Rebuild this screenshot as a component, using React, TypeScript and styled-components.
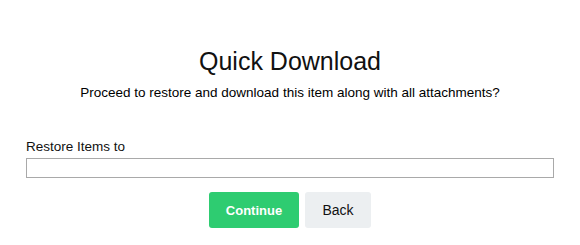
import React from "react";
import styled, { createGlobalStyle } from "styled-components";

const Global = createGlobalStyle`
  html, body { margin: 0; padding: 0; background: #fff; }
  body { font-family: "Liberation Sans", Arial, sans-serif; color: #000; }
`;

const Dialog = styled.div`
  width: 580px;
  height: 245px;
  box-sizing: border-box;
  padding: 46px 26px 0 26px;
  display: flex;
  flex-direction: column;
`;

const Title = styled.h1`
  margin: 0;
  font-size: 25px;
  font-weight: 400;
  line-height: 30px;
  text-align: center;
  color: #111;
`;

const Message = styled.p`
  margin: 9px 0 0 0;
  font-size: 13.5px;
  line-height: 16px;
  text-align: center;
`;

const Field = styled.div`
  margin-top: 38px;
  display: flex;
  flex-direction: column;
  gap: 4px;
`;

const Label = styled.label`
  font-size: 13.5px;
  line-height: 15px;
  color: #111;
`;

const Input = styled.input`
  width: 528px;
  height: 20px;
  box-sizing: border-box;
  border: 1px solid #a9a9a9;
  margin: 0;
  padding: 0 4px;
  font: inherit;
  font-size: 13px;
`;

const Actions = styled.div`
  margin-top: 14px;
  display: flex;
  justify-content: center;
  gap: 6px;
`;

const Button = styled.button<{ $primary?: boolean }>`
  height: 36px;
  width: ${(p) => (p.$primary ? "90px" : "66px")};
  border: none;
  border-radius: 3px;
  font-family: "Liberation Sans", Arial, sans-serif;
  font-size: ${(p) => (p.$primary ? "13px" : "14px")};
  font-weight: ${(p) => (p.$primary ? 700 : 400)};
  background: ${(p) => (p.$primary ? "#2ecc71" : "#eceff1")};
  color: ${(p) => (p.$primary ? "#fff" : "#111")};
  cursor: pointer;
  padding: 0;
`;

export default function App() {
  return (
    <>
      <Global />
      <Dialog>
        <Title>Quick Download</Title>
        <Message>Proceed to restore and download this item along with all attachments?</Message>
        <Field>
          <Label htmlFor="restore">Restore Items to</Label>
          <Input id="restore" type="text" />
        </Field>
        <Actions>
          <Button $primary>Continue</Button>
          <Button>Back</Button>
        </Actions>
      </Dialog>
    </>
  );
}
